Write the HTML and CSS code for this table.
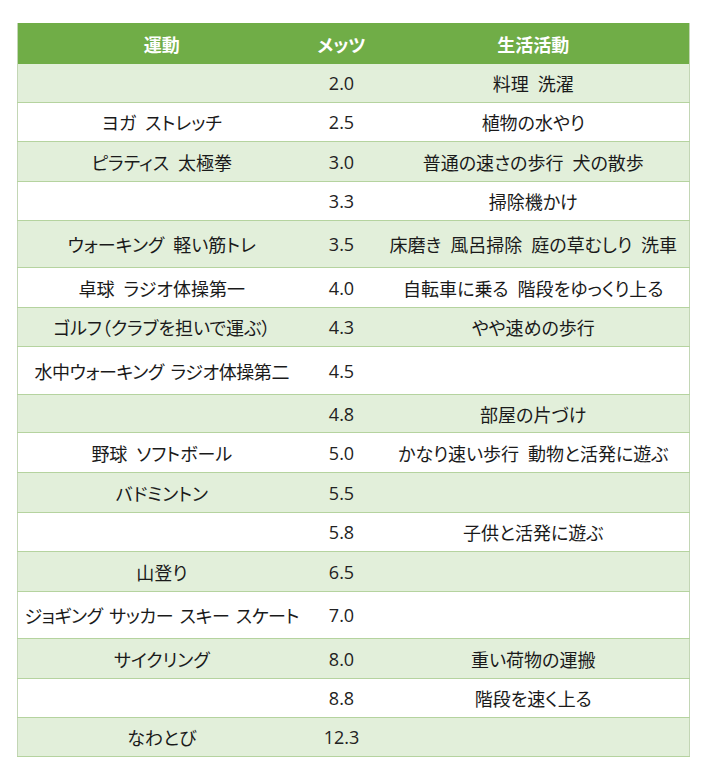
FILE: index.html
```html
<!DOCTYPE html>
<html lang="ja">
<head>
<meta charset="utf-8">
<link rel="stylesheet" href="styles.css">
</head>
<body>
<table class="mets">
  <colgroup><col class="c-sport"><col class="c-mets"><col class="c-life"></colgroup>
  <thead>
    <tr><th>運動</th><th>メッツ</th><th>生活活動</th></tr>
  </thead>
  <tbody>
    <tr class="g"><td></td><td class="num">2.0</td><td>料理 洗濯</td></tr>
    <tr class="w"><td>ヨガ ストレッチ</td><td class="num">2.5</td><td>植物の水やり</td></tr>
    <tr class="g h40"><td>ピラティス 太極拳</td><td class="num">3.0</td><td>普通の速さの歩行 犬の散歩</td></tr>
    <tr class="w"><td></td><td class="num">3.3</td><td>掃除機かけ</td></tr>
    <tr class="g tall"><td>ウォーキング 軽い筋トレ</td><td class="num">3.5</td><td>床磨き 風呂掃除 庭の草むしり 洗車</td></tr>
    <tr class="w h40"><td>卓球 ラジオ体操第一</td><td class="num">4.0</td><td>自転車に乗る 階段をゆっくり上る</td></tr>
    <tr class="g"><td>ゴルフ（クラブを担いで運ぶ）</td><td class="num">4.3</td><td>やや速めの歩行</td></tr>
    <tr class="w tall48"><td class="tight">水中ウォーキング ラジオ体操第二</td><td class="num">4.5</td><td></td></tr>
    <tr class="g h38"><td></td><td class="num">4.8</td><td>部屋の片づけ</td></tr>
    <tr class="w h40"><td>野球 ソフトボール</td><td class="num">5.0</td><td>かなり速い歩行 動物と活発に遊ぶ</td></tr>
    <tr class="g h40"><td>バドミントン</td><td class="num">5.5</td><td></td></tr>
    <tr class="w"><td></td><td class="num">5.8</td><td>子供と活発に遊ぶ</td></tr>
    <tr class="g h40"><td>山登り</td><td class="num">6.5</td><td></td></tr>
    <tr class="w tall"><td class="tight">ジョギング サッカー スキー スケート</td><td class="num">7.0</td><td></td></tr>
    <tr class="g h40"><td>サイクリング</td><td class="num">8.0</td><td>重い荷物の運搬</td></tr>
    <tr class="w"><td></td><td class="num">8.8</td><td>階段を速く上る</td></tr>
    <tr class="g"><td>なわとび</td><td class="num">12.3</td><td></td></tr>
  </tbody>
</table>
</body>
</html>
```
FILE: styles.css
```css
html, body {
  margin: 0;
  padding: 0;
  background: #ffffff;
}
body {
  padding: 23px 0 0 17px;
  font-family: "Noto Sans CJK JP", "Noto Sans", sans-serif;
  font-feature-settings: "palt";
  color: #1a1a1a;
}
.mets {
  border-collapse: collapse;
  width: 672px;
  table-layout: fixed;
  border-left: 1px solid #c3d6b5;
  border-right: 1px solid #c3d6b5;
}
.c-sport { width: 288px; }
.c-mets { width: 72px; }
.c-life { width: 312px; }
.mets th {
  background: #70ad47;
  color: #ffffff;
  font-weight: 700;
  font-size: 18px;
  height: 41px;
  padding: 0;
  text-align: center;
  vertical-align: middle;
}
.mets td {
  font-size: 18px;
  height: 38px;
  padding: 0;
  text-align: center;
  vertical-align: middle;
  border-bottom: 1px solid #b5d39f;
  white-space: nowrap;
  word-spacing: 5px;
}
.mets td.tight {
  letter-spacing: -0.4px;
  word-spacing: 3px;
}
.mets td.num {
  font-family: "Open Sans", "Noto Sans", sans-serif;
  font-size: 18px;
  font-weight: 400;
  color: #222222;
}
.mets tr.g td { background: #e2efda; }
.mets tr.w td { background: #ffffff; }
.mets tr.h38 td { height: 37px; }
.mets tr.h40 td { height: 39px; }
.mets tr.tall td { height: 46px; }
.mets tr.tall48 td { height: 47px; }
```
